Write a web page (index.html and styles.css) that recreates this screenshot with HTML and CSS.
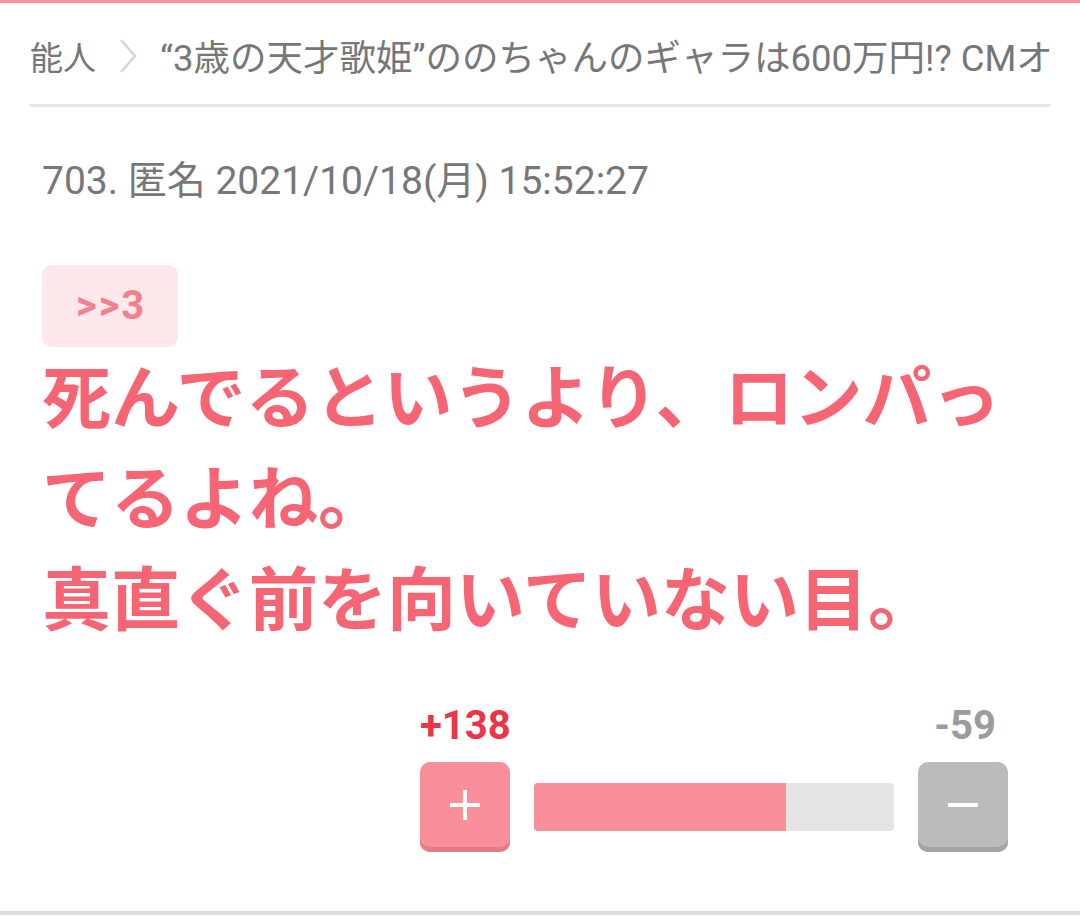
FILE: index.html
```html
<!DOCTYPE html>
<html lang="ja">
<head>
  <meta charset="UTF-8">
  <title>コメント</title>
  <link rel="stylesheet" href="styles.css">
</head>
<body>
  <div class="topline"></div>
  <div class="page">
    <nav class="crumbs">
      <span class="crumb first">能人</span>
      <svg class="chev" width="20" height="36" viewBox="0 0 20 36"><polyline points="3,2 17,18 3,34" fill="none" stroke="#d6d6d6" stroke-width="2.5"/></svg>
      <span class="crumb title">“3歳の天才歌姫”ののちゃんのギャラは600万円!? CMオファー殺到</span>
    </nav>

    <article class="comment">
      <div class="meta">703. 匿名 2021/10/18(月) 15:52:27</div>
      <span class="anchor">&gt;&gt;3</span>
      <p class="body">死んでるというより、ロンパってるよね。<br>真直ぐ前を向いていない目。</p>

      <div class="vote">
        <div class="counts">
          <span class="plus-count">+138</span>
          <span class="minus-count">-59</span>
        </div>
        <div class="vote-row">
          <button class="btn btn-plus"><svg width="34" height="34" viewBox="0 0 34 34"><path d="M17 2v30M2 17h30" stroke="#fff" stroke-width="4"/></svg></button>
          <div class="bar"><div class="fill" style="width: 70%"></div></div>
          <button class="btn btn-minus"><svg width="34" height="34" viewBox="0 0 34 34"><path d="M2 17h30" stroke="#fff" stroke-width="4"/></svg></button>
        </div>
      </div>
    </article>
  </div>
  <div class="bottomline"></div>
</body>
</html>
```

FILE: styles.css
```css
* {
  box-sizing: border-box;
}

body {
  margin: 0;
  background: #fff;
  font-family: Roboto, "Noto Sans CJK JP", sans-serif;
  height: 917px;
  display: flex;
  flex-direction: column;
  overflow: hidden;
}

.topline {
  height: 3px;
  background: #f0939f;
}

.page {
  flex: 1;
  padding: 0 30px;
}

.crumbs {
  display: flex;
  align-items: center;
  gap: 22px;
  height: 104px;
  padding-top: 4px;
  border-bottom: 3px solid #e6e6e6;
  white-space: nowrap;
  overflow: hidden;
  font-size: 36px;
  color: #777;
}

.crumb {
  flex-shrink: 0;
}

.first {
  font-size: 33px;
}

.title {
  min-width: 0;
  flex-shrink: 1;
  overflow: hidden;
  font-size: 36.5px;
}

.chev {
  flex-shrink: 0;
}

.comment {
  padding: 50px 14px 0 12px;
}

.meta {
  font-size: 39px;
  color: #777;
  line-height: 48px;
}

.anchor {
  display: inline-block;
  margin-top: 60px;
  padding: 20px 32px 20px 34px;
  background: #fde9eb;
  border-radius: 10px;
  color: #f47f8e;
  font-size: 40px;
  font-weight: 700;
  letter-spacing: 2px;
  line-height: 42px;
}

.body {
  margin: 2px 0 0;
  font-size: 69px;
  font-weight: 700;
  line-height: 101px;
  color: #f56574;
}

.vote {
  width: 588px;
  margin: 52px 0 0 378px;
}

.counts {
  display: flex;
  justify-content: space-between;
  font-size: 40px;
  font-weight: 700;
  line-height: 44px;
  padding: 0 12px 0 0;
}

.plus-count {
  color: #ea3448;
}

.minus-count {
  color: #9c9c9c;
}

.vote-row {
  display: flex;
  align-items: center;
  gap: 24px;
  margin-top: 14px;
}

.btn {
  width: 90px;
  height: 90px;
  border: none;
  border-radius: 10px;
  display: flex;
  align-items: center;
  justify-content: center;
  padding: 0 0 4px;
  flex-shrink: 0;
}

.btn-plus {
  background: #f98f9b;
  box-shadow: inset 0 -5px 0 #e47b87;
}

.btn-minus {
  background: #bbbbbb;
  box-shadow: inset 0 -5px 0 #a3a3a3;
}

.bar {
  flex: 1;
  height: 48px;
  background: #e5e5e5;
  border-radius: 4px;
  overflow: hidden;
}

.fill {
  height: 100%;
  background: #f98f9b;
}

.bottomline {
  height: 4px;
  background: #dcdcdc;
  margin-bottom: 2px;
}
```
